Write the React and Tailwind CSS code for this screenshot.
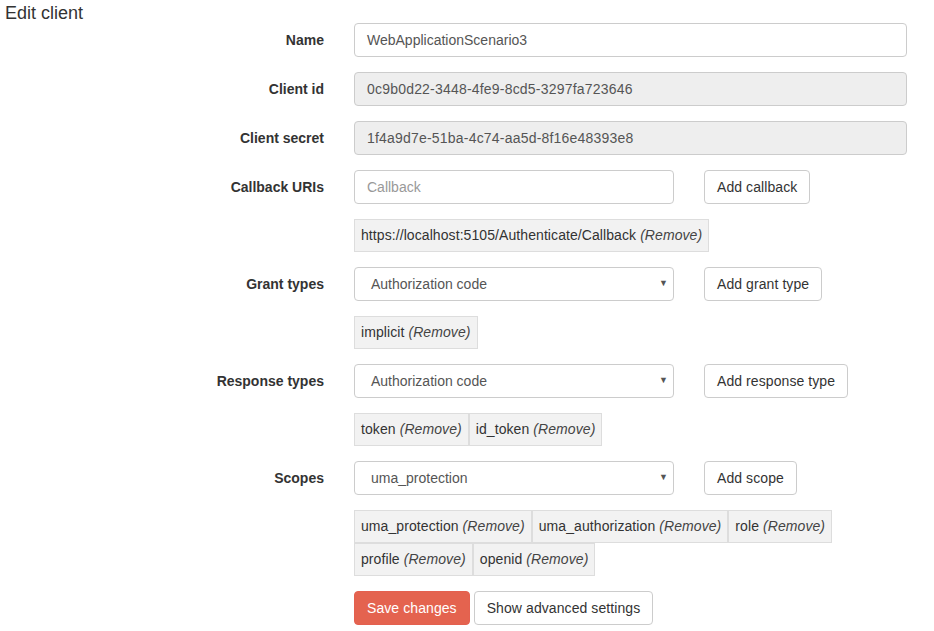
import React from "react";

const font = { fontFamily: '"Liberation Sans", Arial, sans-serif' };

function Label({ children }) {
  return (
    <div className="w-[324px] shrink-0 text-right font-bold text-[14px] leading-[20px] text-[#333] pt-[7px]">
      {children}
    </div>
  );
}

function Row({ label, children, className = "" }) {
  return (
    <div className={"flex gap-[30px] mb-[15px] " + className}>
      {label ? <Label>{label}</Label> : <div className="w-[324px] shrink-0" />}
      <div className="flex-1 min-w-0 pr-[27px]">{children}</div>
    </div>
  );
}

function Input({ value, disabled, placeholder, narrow }) {
  return (
    <div
      className={
        "h-[34px] border border-[#ccc] rounded-[4px] px-[12px] flex items-center text-[14px] " +
        (disabled ? "bg-[#eee] tracking-[0.2px] " : "bg-white ") +
        (narrow ? "w-[320px] " : "w-full ") +
        (placeholder ? "text-[#999]" : "text-[#555]")
      }
    >
      {value || placeholder}
    </div>
  );
}

function Select({ value }) {
  return (
    <div className="h-[34px] w-[320px] border border-[#ccc] rounded-[4px] pl-[16px] pr-[5px] flex items-center justify-between text-[14px] text-[#555] bg-white">
      <span>{value}</span>
      <span className="text-[9px] text-[#555]">▼</span>
    </div>
  );
}

function Btn({ children, className = "" }) {
  return (
    <div
      className={
        "h-[34px] px-[12px] border rounded-[4px] flex items-center text-[14px] whitespace-nowrap tracking-[0.08px] " +
        className
      }
    >
      {children}
    </div>
  );
}

function Tag({ name }) {
  return (
    <div className="h-[33px] px-[6px] border border-[#ddd] bg-[#f2f2f2] flex items-center text-[14px] text-[#333] whitespace-nowrap tracking-[0.08px]">
      {name}&nbsp;<i className="text-[#444]">(Remove)</i>
    </div>
  );
}

function ControlWithButton({ control, button }) {
  return (
    <div className="flex items-center gap-[30px]">
      {control}
      <Btn className="border-[#ccc] bg-white text-[#333]">{button}</Btn>
    </div>
  );
}

export default function App() {
  return (
    <div className="w-[934px] h-[631px] bg-white overflow-hidden" style={font}>
      <div className="pl-[5px] pt-[3px] text-[18px] leading-[20px] text-[#333]">Edit client</div>
      <div>
        <Row label="Name">
          <Input value="WebApplicationScenario3" />
        </Row>
        <Row label="Client id">
          <Input value="0c9b0d22-3448-4fe9-8cd5-3297fa723646" disabled />
        </Row>
        <Row label="Client secret">
          <Input value="1f4a9d7e-51ba-4c74-aa5d-8f16e48393e8" disabled />
        </Row>
        <Row label="Callback URIs">
          <ControlWithButton control={<Input placeholder="Callback" narrow />} button="Add callback" />
        </Row>
        <Row>
          <div className="flex flex-wrap">
            <Tag name="https://localhost:5105/Authenticate/Callback" />
          </div>
        </Row>
        <Row label="Grant types">
          <ControlWithButton control={<Select value="Authorization code" />} button="Add grant type" />
        </Row>
        <Row>
          <div className="flex flex-wrap">
            <Tag name="implicit" />
          </div>
        </Row>
        <Row label="Response types">
          <ControlWithButton control={<Select value="Authorization code" />} button="Add response type" />
        </Row>
        <Row>
          <div className="flex flex-wrap">
            <Tag name="token" />
            <Tag name="id_token" />
          </div>
        </Row>
        <Row label="Scopes">
          <ControlWithButton control={<Select value="uma_protection" />} button="Add scope" />
        </Row>
        <Row>
          <div className="flex flex-wrap">
            <Tag name="uma_protection" />
            <Tag name="uma_authorization" />
            <Tag name="role" />
            <Tag name="profile" />
            <Tag name="openid" />
          </div>
        </Row>
        <Row>
          <div className="flex gap-[4px]">
            <Btn className="border-[#e4604f] bg-[#e4634f] text-white">Save changes</Btn>
            <Btn className="border-[#ccc] bg-white text-[#333]">Show advanced settings</Btn>
          </div>
        </Row>
      </div>
    </div>
  );
}
